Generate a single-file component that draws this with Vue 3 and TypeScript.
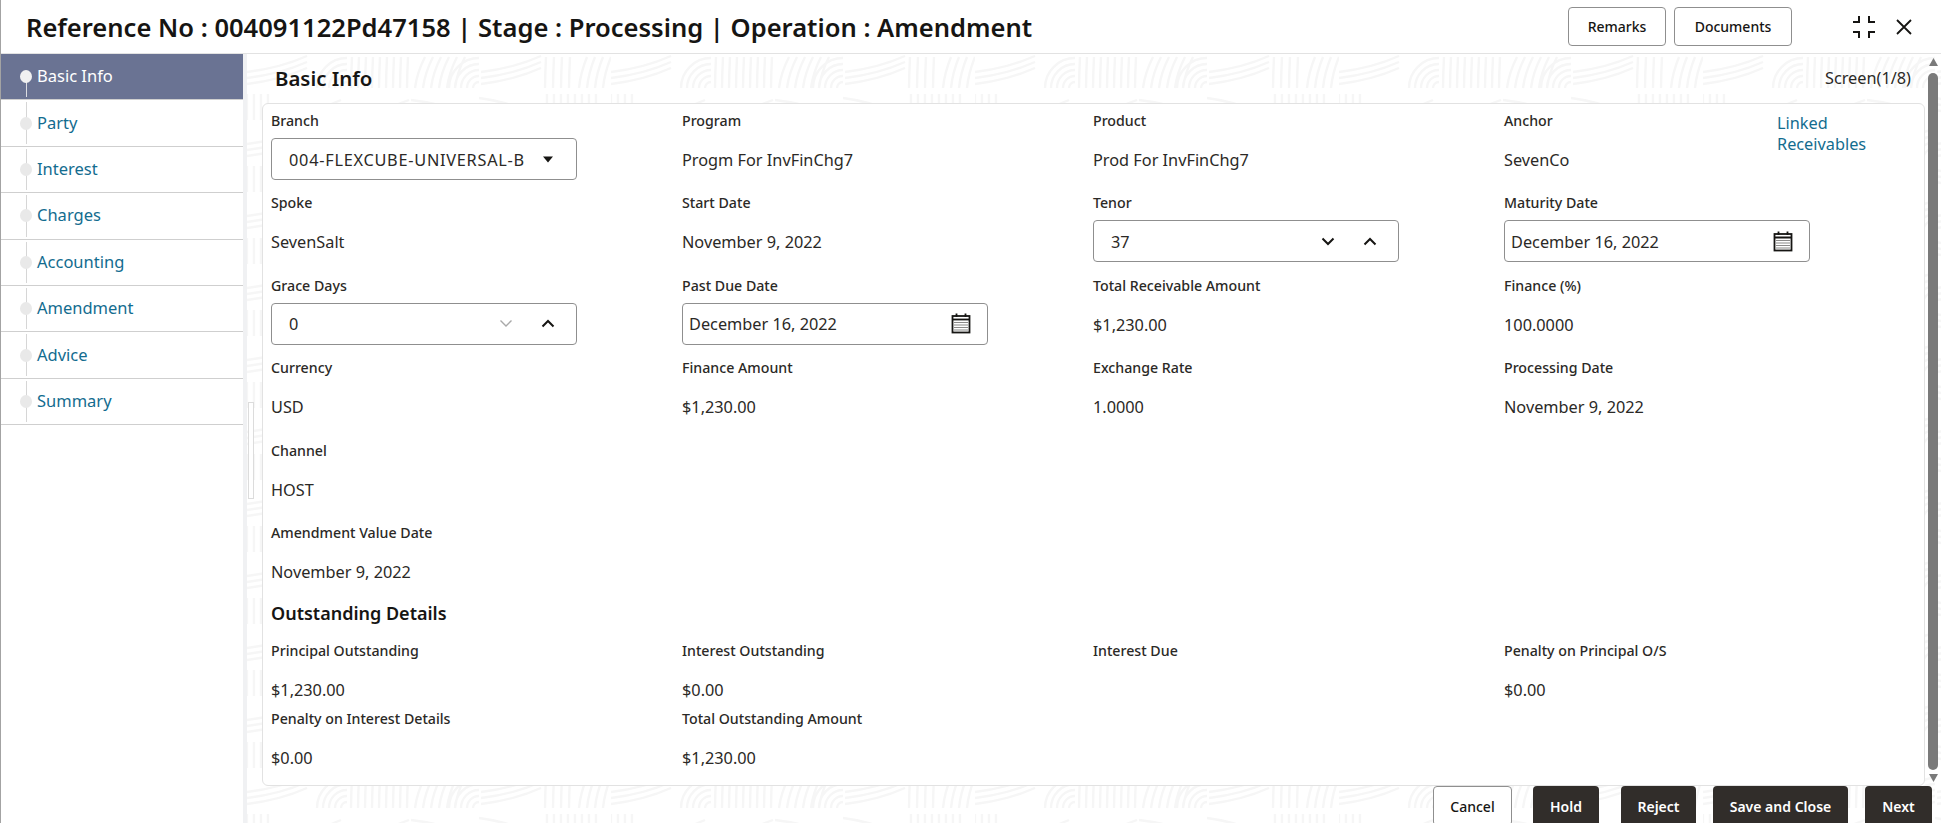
<script setup lang="ts">
type Kind = 'text' | 'select' | 'number' | 'date'
interface Field {
  label: string
  value?: string
  kind?: Kind
  downMuted?: boolean
}

const navItems: string[] = ['Basic Info', 'Party', 'Interest', 'Charges', 'Accounting', 'Amendment', 'Advice', 'Summary']

const rows: Field[][] = [
  [
    { label: 'Branch', value: '004-FLEXCUBE-UNIVERSAL-BANK', kind: 'select' },
    { label: 'Program', value: 'Progm For InvFinChg7' },
    { label: 'Product', value: 'Prod For InvFinChg7' },
    { label: 'Anchor', value: 'SevenCo' },
  ],
  [
    { label: 'Spoke', value: 'SevenSalt' },
    { label: 'Start Date', value: 'November 9, 2022' },
    { label: 'Tenor', value: '37', kind: 'number' },
    { label: 'Maturity Date', value: 'December 16, 2022', kind: 'date' },
  ],
  [
    { label: 'Grace Days', value: '0', kind: 'number', downMuted: true },
    { label: 'Past Due Date', value: 'December 16, 2022', kind: 'date' },
    { label: 'Total Receivable Amount', value: '$1,230.00' },
    { label: 'Finance (%)', value: '100.0000' },
  ],
  [
    { label: 'Currency', value: 'USD' },
    { label: 'Finance Amount', value: '$1,230.00' },
    { label: 'Exchange Rate', value: '1.0000' },
    { label: 'Processing Date', value: 'November 9, 2022' },
  ],
  [{ label: 'Channel', value: 'HOST' }],
  [{ label: 'Amendment Value Date', value: 'November 9, 2022' }],
]

const outstanding: Field[][] = [
  [
    { label: 'Principal Outstanding', value: '$1,230.00' },
    { label: 'Interest Outstanding', value: '$0.00' },
    { label: 'Interest Due' },
    { label: 'Penalty on Principal O/S', value: '$0.00' },
  ],
  [
    { label: 'Penalty on Interest Details', value: '$0.00' },
    { label: 'Total Outstanding Amount', value: '$1,230.00' },
  ],
]

const darkButtons: string[] = ['Hold', 'Reject', 'Save and Close', 'Next']

function sweep(x: number, y: number, w: number, rise: number, n: number): string {
  let d = ''
  for (let i = 0; i < n; i++) {
    const yy = y + i * 6
    d += `M${x} ${yy}Q${x + w * 0.55} ${yy - rise * 0.25} ${x + w} ${yy - rise}`
  }
  return d
}
function bars(x: number, y: number, h: number, n: number, step: number, lean: number): string {
  let d = ''
  for (let i = 0; i < n; i++) {
    const xx = x + i * step
    d += `M${xx} ${y + h}Q${xx + lean * 0.2} ${y + h * 0.5} ${xx + lean} ${y}`
  }
  return d
}
function arcs(cx: number, cy: number, from: number, n: number): string {
  let d = ''
  for (let i = 0; i < n; i++) {
    const r = from + i * 6
    d += `M${cx - r} ${cy}A${r} ${r} 0 0 1 ${cx} ${cy - r}`
  }
  return d
}

const patternPath: string = [
  sweep(0, 18, 60, 16, 3),
  arcs(100, 34, 6, 5),
  bars(104, 3, 31, 9, 7, 1),
  bars(168, 3, 31, 6, 8, 10),
  arcs(232, 34, 6, 5),
  sweep(234, 18, 60, 16, 3),
  bars(298, 3, 31, 4, 8, 1),
  bars(332, 3, 31, 4, 8, 8),
  bars(0, 40, 26, 4, 7, 0),
  sweep(44, 60, 50, 14, 3),
  sweep(106, 60, 56, 14, 3),
  sweep(164, 46, 56, -14, 3),
  sweep(232, 44, 50, -14, 3),
  bars(300, 40, 26, 8, 7, 0),
].join('')
</script>

<template>
  <div class="page">
    <div class="dialog">
      <header class="top">
        <h1 class="ref">Reference No : 004091122Pd47158 | Stage : Processing | Operation : Amendment</h1>
        <div class="top-actions">
          <button class="btn-light remarks" type="button">Remarks</button>
          <button class="btn-light documents" type="button">Documents</button>
          <svg class="shrink" viewBox="0 0 24 24" width="24" height="24" fill="none" stroke="#161513" stroke-width="2">
            <path d="M1 7H7V1" />
            <path d="M23 7H17V1" />
            <path d="M1 17H7V23" />
            <path d="M23 17H17V23" />
          </svg>
          <svg class="close" viewBox="0 0 16 16" width="16" height="16" fill="none" stroke="#161513" stroke-width="1.8">
            <path d="M1 1L15 15M15 1L1 15" />
          </svg>
        </div>
      </header>

      <div class="body">
        <nav class="side">
          <a v-for="(item, i) in navItems" :key="item" class="nav" :class="{ active: i === 0 }">
            <span class="dot"></span>
            <span class="nav-text">{{ item }}</span>
          </a>
        </nav>

        <main class="main">
          <svg class="bg" width="100%" height="100%" aria-hidden="true">
            <defs>
              <pattern id="print" width="364" height="72" patternUnits="userSpaceOnUse">
                <path :d="patternPath" fill="none" stroke="#f6f6f6" stroke-width="2.4" />
              </pattern>
            </defs>
            <rect width="100%" height="100%" fill="url(#print)" />
          </svg>
          <div class="splitter"></div>

          <div class="scroll-wrap">
            <div class="pane">
              <div class="pane-head">
                <h2 class="pane-title">Basic Info</h2>
                <span class="screen">Screen(1/8)</span>
              </div>

              <section class="card">
                <div class="rows">
                  <div v-for="(row, r) in rows" :key="r" class="row">
                    <div v-for="f in row" :key="f.label" class="field">
                      <div class="label">{{ f.label }}</div>
                      <div v-if="f.kind === 'select'" class="control select">
                        <span class="clip">{{ f.value }}</span>
                        <span class="ctl-btn">
                          <svg width="12" height="7" viewBox="0 0 12 7"><path d="M1 0.5H11L6 6.5Z" fill="#161513" /></svg>
                        </span>
                      </div>
                      <div v-else-if="f.kind === 'number'" class="control number">
                        <span class="grow">{{ f.value }}</span>
                        <span class="ctl-btn">
                          <svg width="14" height="9" viewBox="0 0 14 9" fill="none" :stroke="f.downMuted ? '#a9a9a9' : '#161513'" :stroke-width="f.downMuted ? 1.4 : 2"><path d="M1.5 1.5L7 7L12.5 1.5" /></svg>
                        </span>
                        <span class="ctl-btn">
                          <svg width="14" height="9" viewBox="0 0 14 9" fill="none" stroke="#161513" stroke-width="2"><path d="M1.5 7.5L7 2L12.5 7.5" /></svg>
                        </span>
                      </div>
                      <div v-else-if="f.kind === 'date'" class="control date">
                        <span class="grow">{{ f.value }}</span>
                        <svg class="cal" width="20" height="21" viewBox="0 0 20 21" fill="none" stroke="#161513">
                          <rect x="1.5" y="3" width="17" height="16.5" stroke-width="1.8" />
                          <path d="M1 6.5H19" stroke-width="1.8" />
                          <path d="M5.5 0.5V4M14.5 0.5V4" stroke-width="1.8" />
                          <path d="M3.5 9.5H16.5M3.5 12H16.5M3.5 14.5H16.5M3.5 17H16.5" stroke-width="1.2" stroke-dasharray="1 1" />
                        </svg>
                      </div>
                      <div v-else class="value">{{ f.value }}</div>
                    </div>
                    <a v-if="r === 0" class="link">Linked Receivables</a>
                  </div>
                </div>

                <h3 class="sub">Outstanding Details</h3>
                <div v-for="(row, r) in outstanding" :key="'o' + r" class="row tight">
                  <div v-for="f in row" :key="f.label" class="field">
                    <div class="label">{{ f.label }}</div>
                    <div class="value">{{ f.value }}</div>
                  </div>
                </div>
              </section>
            </div>

            <div class="scrollbar">
              <svg width="9" height="8" viewBox="0 0 9 8"><path d="M4.5 0L9 8H0Z" fill="#7a7a7a" /></svg>
              <div class="thumb"></div>
              <svg width="9" height="8" viewBox="0 0 9 8"><path d="M0 0H9L4.5 8Z" fill="#7a7a7a" /></svg>
            </div>
          </div>

          <footer class="foot">
            <button class="btn-light cancel" type="button">Cancel</button>
            <button v-for="b in darkButtons" :key="b" class="btn-dark" type="button">{{ b }}</button>
          </footer>
        </main>
      </div>
    </div>
  </div>
</template>

<style scoped>
.page {
  height: 833px;
  background: #fff;
  font-family: 'Noto Sans', 'Open Sans', sans-serif;
  color: #2b2926;
  overflow: hidden;
}
.dialog {
  height: 823px;
  display: flex;
  flex-direction: column;
  border-left: 1px solid #a3a3a3;
  overflow: hidden;
  box-sizing: border-box;
}
.top {
  height: 54px;
  flex: none;
  box-sizing: border-box;
  border-bottom: 1px solid #e2e2e2;
  display: flex;
  align-items: center;
  padding-left: 25px;
}
.ref {
  margin: 0;
  flex: 1;
  font-size: 25.56px;
  font-weight: 600;
  color: #161513;
  white-space: nowrap;
}
.top-actions {
  display: flex;
  align-items: center;
}
button {
  font-family: inherit;
  font-size: 14px;
  font-weight: 500;
  cursor: pointer;
}
.btn-light {
  background: #fff;
  border: 1px solid #8f8f8f;
  border-radius: 4px;
  color: #161513;
  padding: 0;
}
.remarks,
.documents {
  height: 39px;
}
.remarks {
  width: 98px;
  margin-right: 8px;
}
.documents {
  width: 118px;
}
.shrink {
  margin-left: 60px;
}
.close {
  margin-left: 20px;
  margin-right: 29px;
}
.body {
  flex: 1;
  display: flex;
  min-height: 0;
}
.side {
  width: 242px;
  flex: none;
  background: #fff;
}
.nav {
  height: 46.4px;
  box-sizing: border-box;
  border-bottom: 1px solid #cfcfcf;
  display: flex;
  align-items: center;
  gap: 5px;
  padding-left: 19px;
  font-size: 16.5px;
  color: #136c8f;
  position: relative;
}
.nav-text {
  margin-bottom: 2px;
}
.nav::before {
  content: '';
  position: absolute;
  left: 25px;
  top: 2px;
  bottom: 2px;
  width: 1px;
  background: #d6d6d6;
}
.dot {
  width: 12px;
  height: 13px;
  border-radius: 50%;
  background: #e9e9e9;
  position: relative;
  flex: none;
}
.nav.active {
  background: #6a7393;
  color: #fff;
}
.nav.active::before {
  background: #dcdde2;
  top: 22px;
  bottom: 2px;
}
.nav.active .dot {
  background: #f1f1f1;
}
.main {
  flex: 1;
  min-width: 0;
  position: relative;
  display: flex;
  flex-direction: column;
  background: #fff;
  border-left: 4px solid #f0f1f3;
}
.bg {
  position: absolute;
  left: 0;
  top: 0;
}
.splitter {
  position: absolute;
  left: 1px;
  top: 348px;
  width: 6px;
  height: 97px;
  background: #fff;
  border: 1px solid #dcdcdc;
  box-sizing: border-box;
}
.scroll-wrap {
  flex: 1;
  min-height: 0;
  display: flex;
  position: relative;
}
.pane {
  flex: 1;
  min-width: 0;
  padding-left: 15px;
  display: flex;
  flex-direction: column;
}
.pane-head {
  height: 49px;
  flex: none;
  display: flex;
  align-items: center;
  justify-content: space-between;
  padding-left: 13px;
  padding-right: 14px;
  box-sizing: border-box;
  padding-bottom: 2px;
}
.pane-title {
  margin: 0;
  font-size: 20.4px;
  font-weight: 600;
  color: #161513;
}
.screen {
  font-size: 16.3px;
  color: #2b2926;
}
.card {
  flex: 1;
  min-height: 0;
  background: #fff;
  border: 1px solid #e2e2e2;
  border-radius: 6px;
  padding: 7px 8px 0;
  overflow: hidden;
  box-sizing: border-box;
}
.rows {
  display: flex;
  flex-direction: column;
  gap: 13.4px;
}
.row {
  display: grid;
  grid-template-columns: 411px 411px 411px 274px 1fr;
}
.row.tight {
  height: 68px;
}
.field {
  min-width: 0;
}
.label {
  font-size: 14.2px;
  font-weight: 500;
  line-height: 20px;
  color: #2b2926;
  margin-bottom: 7px;
}
.value {
  font-size: 16.3px;
  line-height: 40px;
  padding-top: 2px;
  color: #2b2926;
}
.control {
  width: 306px;
  height: 42px;
  box-sizing: border-box;
  border: 1px solid #8f8f8f;
  border-radius: 4px;
  background: #fff;
  display: flex;
  align-items: center;
  font-size: 16.3px;
  color: #2b2926;
}
.select,
.number {
  padding-left: 17px;
  padding-right: 7px;
}
.date {
  padding-left: 6px;
  padding-right: 16px;
}
.clip {
  width: 235px;
  margin-right: 3px;
  overflow: hidden;
  white-space: nowrap;
  letter-spacing: 0.75px;
  padding-top: 1px;
}
.grow {
  flex: 1;
  padding-top: 1px;
}
.ctl-btn {
  width: 42px;
  flex: none;
  display: flex;
  align-items: center;
  justify-content: center;
}
.select .ctl-btn {
  margin-left: auto;
}
.link {
  font-size: 16.3px;
  line-height: 21px;
  color: #136c8f;
  padding-top: 2px;
  width: 110px;
  margin-left: -1px;
}
.sub {
  margin: 8px 0 15px;
  font-size: 18px;
  line-height: 26px;
  font-weight: 600;
  color: #161513;
}
.scrollbar {
  width: 16px;
  flex: none;
  display: flex;
  flex-direction: column;
  align-items: center;
  padding: 4px 0 0;
  box-sizing: border-box;
  position: relative;
}
.thumb {
  width: 10px;
  height: 697px;
  margin: 7px 0 4px;
  background: #7a7a7a;
  border-radius: 5px;
}
.foot {
  height: 37px;
  flex: none;
  display: flex;
  justify-content: flex-end;
  position: relative;
  padding-right: 9px;
  padding-top: 0;
  overflow: visible;
}
.foot button {
  height: 40px;
  border-radius: 4px;
  white-space: nowrap;
}
.cancel {
  width: 79px;
  margin-right: 21px;
}
.btn-dark {
  background: #312d2a;
  border: none;
  color: #fff;
  font-weight: 600;
  padding: 0;
}
.btn-dark:nth-of-type(2) {
  width: 66px;
  margin-right: 22px;
}
.btn-dark:nth-of-type(3) {
  width: 75px;
  margin-right: 17px;
}
.btn-dark:nth-of-type(4) {
  width: 135px;
  margin-right: 17px;
}
.btn-dark:nth-of-type(5) {
  width: 67px;
}
</style>
